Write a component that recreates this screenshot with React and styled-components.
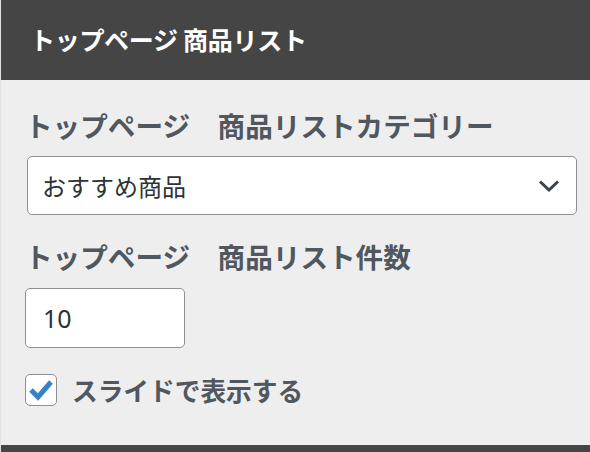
import React from "react";
import styled, { createGlobalStyle } from "styled-components";

const Global = createGlobalStyle`
  html, body {
    margin: 0;
    padding: 0;
    background: #eeeeee;
  }
  body {
    font-family: "Noto Sans CJK JP", "Noto Sans", sans-serif;
  }
`;

const Panel = styled.div`
  width: 590px;
  height: 452px;
  display: flex;
  flex-direction: column;
  background: #eeeeee;
  border-left: 1px solid #e2e2e2;
  box-sizing: border-box;
  overflow: hidden;
`;

const Header = styled.header`
  height: 80px;
  flex-shrink: 0;
  background: #454545;
  display: flex;
  align-items: center;
  padding-left: 29px;
  h2 {
    margin: 0 0 2px;
    color: #ffffff;
    font-size: 25px;
    font-weight: 700;
    letter-spacing: -0.3px;
    line-height: 1;
  }
`;

const Body = styled.div`
  flex: 1;
  padding: 29px 0 0 24px;
  display: flex;
  flex-direction: column;
  align-items: flex-start;
`;

const Label = styled.label`
  display: block;
  color: #50575e;
  font-size: 27.6px;
  font-weight: 700;
  line-height: 32px;
  margin-top: ${(p) => p.$gap || 0}px;
`;

const SelectBox = styled.div`
  margin: 15px 0 0 2px;
  width: 550px;
  height: 59px;
  box-sizing: border-box;
  background: #ffffff;
  border: 1.5px solid #8c8f94;
  border-radius: 5px;
  display: flex;
  align-items: center;
  justify-content: space-between;
  padding: 0 16px 0 14px;
  span {
    color: #2c3338;
    font-size: 24px;
    line-height: 1;
  }
  svg {
    display: block;
  }
`;

const NumberInput = styled.div`
  margin-top: 16px;
  width: 160px;
  height: 60px;
  box-sizing: border-box;
  background: #ffffff;
  border: 1.5px solid #8c8f94;
  border-radius: 5px;
  display: flex;
  align-items: center;
  padding-left: 17px;
  color: #2c3338;
  font-size: 25px;
  font-family: "Noto Sans", sans-serif;
`;

const CheckRow = styled.div`
  margin-top: 26px;
  display: flex;
  align-items: center;
  gap: 15px;
  span {
    color: #50575e;
    font-size: 25.7px;
    font-weight: 700;
    line-height: 32px;
  }
`;

const Box = styled.div`
  width: 32px;
  height: 32px;
  box-sizing: border-box;
  background: #ffffff;
  border: 1.5px solid #8c8f94;
  border-radius: 5px;
  display: flex;
  align-items: center;
  justify-content: center;
`;

const Footer = styled.div`
  height: 7px;
  flex-shrink: 0;
  background: #454545;
`;

export default function App() {
  return (
    <>
      <Global />
      <Panel>
        <Header>
          <h2>トップページ 商品リスト</h2>
        </Header>
        <Body>
          <Label>トップページ　商品リストカテゴリー</Label>
          <SelectBox>
            <span>おすすめ商品</span>
            <svg width="22" height="14" viewBox="0 0 22 14">
              <path d="M2 2.5 L11 11 L20 2.5" fill="none" stroke="#3c434a" strokeWidth="3" />
            </svg>
          </SelectBox>
          <Label $gap={25}>トップページ　商品リスト件数</Label>
          <NumberInput>10</NumberInput>
          <CheckRow>
            <Box>
              <svg width="26" height="22" viewBox="0 0 26 22">
                <path d="M3 11 L10 18 L23 3" fill="none" stroke="#3582c4" strokeWidth="5" />
              </svg>
            </Box>
            <span>スライドで表示する</span>
          </CheckRow>
        </Body>
        <Footer />
      </Panel>
    </>
  );
}
